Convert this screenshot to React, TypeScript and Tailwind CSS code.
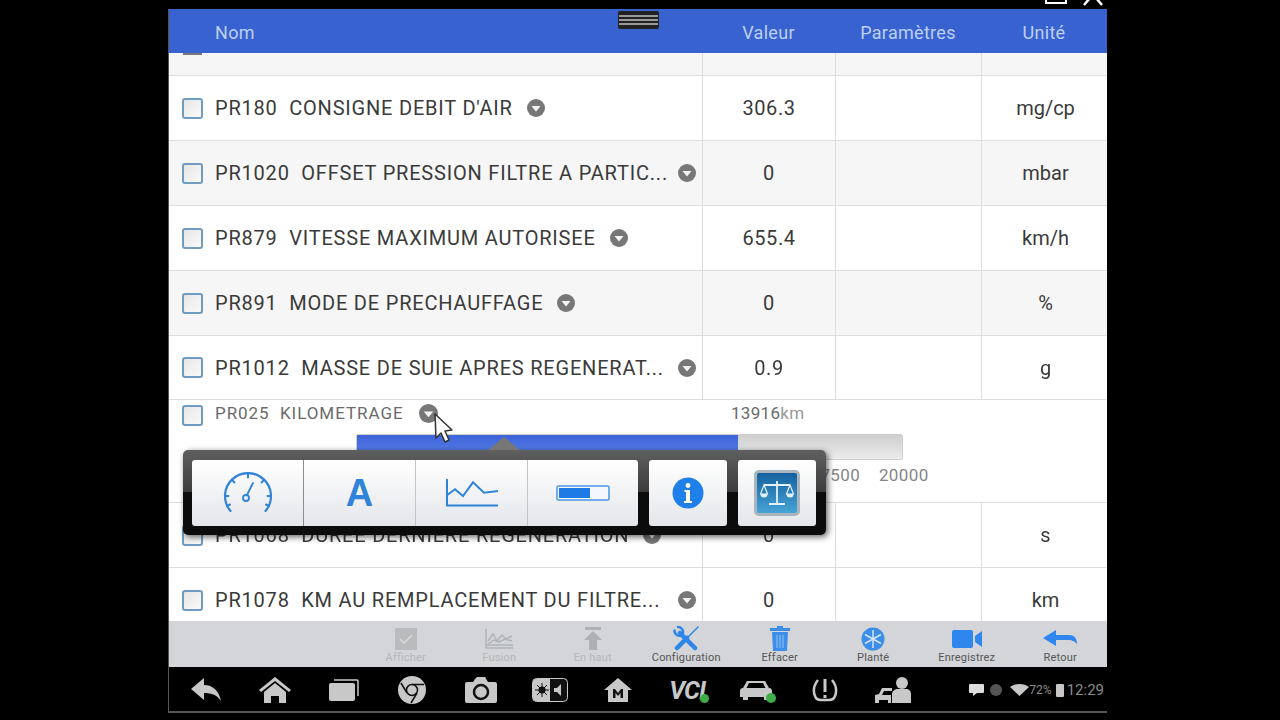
import type { ReactNode } from 'react';

interface RowProps {
  name: string;
  value: string;
  unit: string;
  gray?: boolean;
  height?: string;
}

const rows: RowProps[] = [
  { name: "PR180  CONSIGNE DEBIT D'AIR", value: '306.3', unit: 'mg/cp' },
  { name: 'PR1020  OFFSET PRESSION FILTRE A PARTIC...', value: '0', unit: 'mbar', gray: true },
  { name: 'PR879  VITESSE MAXIMUM AUTORISEE', value: '655.4', unit: 'km/h' },
  { name: 'PR891  MODE DE PRECHAUFFAGE', value: '0', unit: '%', gray: true },
  { name: 'PR1012  MASSE DE SUIE APRES REGENERAT...', value: '0.9', unit: 'g', height: 'h-[64px]' },
];

function Checkbox() {
  return (
    <span className="block h-[21px] w-[21px] shrink-0 rounded-[3px] border-2 border-[#6f9cc0] bg-gradient-to-br from-[#e6e6e6] to-[#fafafa]" />
  );
}

function DownDot({ size = 18 }: { size?: number }) {
  return (
    <svg width={size} height={size} viewBox="0 0 18 18" className="shrink-0">
      <circle cx="9" cy="9" r="9" fill="#777" />
      <path d="M4.5 7h9L9 12.5z" fill="#f4f4f4" />
    </svg>
  );
}

function Row({ name, value, unit, gray, height = 'h-[65px]' }: RowProps) {
  // les noms tronqués ont tous la flèche au même endroit
  const cut = name.endsWith('...');
  return (
    <div className={`flex ${height} shrink-0 border-b border-[#dedede] text-[20px] text-[#3a3a3a] ${gray ? 'bg-[#f6f6f6]' : 'bg-white'}`}>
      <div className="flex w-[533px] items-center pl-[13px]">
        <Checkbox />
        <span className={`ml-[12px] whitespace-pre tracking-[0.8px] ${cut ? 'w-[449px]' : ''}`}>{name}</span>
        <span className="ml-[14px]"><DownDot /></span>
      </div>
      <div className="flex w-[133px] items-center justify-center border-l border-[#dedede] tracking-[0.6px]">{value}</div>
      <div className="w-[146px] border-l border-[#dedede]" />
      <div className="flex w-[126px] items-center justify-center border-l border-[#dedede] pl-[2px]">{unit}</div>
    </div>
  );
}

function GaugeIcon() {
  return (
    <svg width="50" height="42" viewBox="0 0 50 42" fill="none" stroke="#2f83d8" strokeWidth="2.2" strokeLinecap="round">
      <path d="M7.5 39A23 23 0 1 1 42.5 39" />
      <path d="M25 2v3.5M9 8l2.5 2.5M41 8l-2.5 2.5M2 24h3.5M48 24h-3.5M4 34l3-1.5M46 34l-3-1.5" strokeWidth="2" />
      <circle cx="23" cy="26" r="3" strokeWidth="1.8" />
      <path d="M24 23l6-12" strokeWidth="1.8" />
    </svg>
  );
}

function GraphIcon() {
  return (
    <svg width="54" height="30" viewBox="0 0 54 30" fill="none" stroke="#2f83d8" strokeWidth="2">
      <path d="M2 1v26.5h51" />
      <path d="M2.3 17L10 11.3 18 18 28 4.3 39 14.7 53 13" />
    </svg>
  );
}

function BarIcon() {
  return (
    <svg width="54" height="16" viewBox="0 0 54 16">
      <rect x="1" y="1" width="52" height="14" rx="1.5" fill="#f4f8fd" stroke="#4b94e6" strokeWidth="1.5" />
      <rect x="3" y="3" width="31" height="10" fill="#1e7be6" />
    </svg>
  );
}

function InfoIcon() {
  return (
    <svg width="32" height="32" viewBox="0 0 32 32">
      <circle cx="16" cy="16" r="15.5" fill="#1f80ea" />
      <circle cx="16" cy="8.5" r="2.4" fill="#fff" />
      <path d="M12.5 13h5.5v11h2v2h-8v-2h2v-9h-1.5z" fill="#fff" />
    </svg>
  );
}

function ScaleIcon() {
  return (
    <span className="flex h-[46px] w-[46px] items-center justify-center rounded-[5px] border-[3px] border-[#a9b4bd] bg-gradient-to-b from-[#14619f] to-[#47a4d6]">
      <svg width="34" height="30" viewBox="0 0 34 30" fill="none" stroke="#e4f1f9" strokeWidth="1.8">
        <path d="M17 3v22M9 26h16M4 7h26" />
        <path d="M4 7L0.5 16h7zM30 7l-3.5 9h7z" strokeWidth="1.2" />
        <path d="M0.5 16a3.5 3.5 0 0 0 7 0zM26.5 16a3.5 3.5 0 0 0 7 0z" fill="#e4f1f9" stroke="none" />
      </svg>
    </span>
  );
}

function Popover() {
  const cell = 'flex h-full items-center justify-center bg-gradient-to-b from-white to-[#e4e6ea]';
  return (
    <div className="absolute left-[14px] top-[441px] h-[85px] w-[643px] rounded-[5px] bg-gradient-to-b from-[#5f5f5f] via-[#3c3c3c] via-50% to-[#0c0c0c] to-50% px-[9px] pt-[10px] shadow-[2px_2px_6px_rgba(0,0,0,0.6)]">
      <div className="absolute left-[305px] top-[-13px] h-0 w-0 border-x-[16px] border-b-[13px] border-x-transparent border-b-[#777]" />
      <div className="flex h-[66px] items-stretch">
        <div className="flex w-[446px] overflow-hidden rounded-[3px]">
          <div className={`${cell} w-[111px]`}><GaugeIcon /></div>
          <div className={`${cell} w-[112px] border-l border-[#8c8c8c]`}>
            <span className="font-['Liberation_Sans',sans-serif] text-[38px] font-bold text-[#2f83d8]">A</span>
          </div>
          <div className={`${cell} w-[112px] border-l border-[#c4c4c4]`}><GraphIcon /></div>
          <div className={`${cell} w-[111px] border-l border-[#c4c4c4]`}><BarIcon /></div>
        </div>
        <div className={`${cell} ml-[11px] w-[78px] rounded-[3px]`}><InfoIcon /></div>
        <div className={`${cell} ml-[11px] w-[78px] rounded-[3px]`}><ScaleIcon /></div>
      </div>
    </div>
  );
}

function ExpandedRow() {
  return (
    <div className="relative h-[103px] shrink-0 border-b border-[#dedede] bg-white text-[#6a6a6a]">
      <div className="flex h-[28px] items-center pl-[13px] pt-[3px] text-[17px]">
        <Checkbox />
        <span className="ml-[12px] w-[192px] whitespace-pre pb-[4px] tracking-[0.95px]">{'PR025  KILOMETRAGE'}</span>
        <span className="ml-[12px] pb-[4px]"><DownDot size={19} /></span>
        <span className="ml-[293px] pb-[4px] tracking-[0.3px]">13916<span className="text-[#999]">km</span></span>
      </div>
      <div className="ml-[187px] mt-[6px] flex h-[26px] w-[547px] rounded-[2px] border border-[#cfcfcf] bg-gradient-to-b from-[#cfcfcf] to-[#ececec]">
        <div className="h-full w-[381px] bg-gradient-to-b from-[#3f63d8] to-[#5c86ee]" />
      </div>
      <div className="ml-[153px] mt-[3px] grid w-[616px] grid-cols-9 text-center text-[17px] tracking-[0.4px] text-[#858585]">
        <span className="col-start-8">17500</span>
        <span>20000</span>
      </div>
    </div>
  );
}

function ToolButton({ icon, label, dim }: { icon: ReactNode; label: string; dim?: boolean }) {
  return (
    <div className="flex w-[93.5px] flex-col items-center pt-[5px]">
      <span className="flex h-[25px] items-center">{icon}</span>
      <span className={`text-[11px] leading-[14px] tracking-[0.2px] ${dim ? 'text-[#b5b5b5]' : 'text-[#555]'}`}>{label}</span>
    </div>
  );
}

function NavIcon({ children }: { children: ReactNode }) {
  return <span className="flex w-[68.7px] justify-center">{children}</span>;
}

export default function App() {
  return (
    <div className="relative h-[720px] w-[1280px] overflow-hidden bg-black font-['Roboto',sans-serif]">
      <div className="flex h-[9px] justify-end pr-[175px]">
        <span className="h-[4px] w-[22px] border-x-2 border-b-2 border-white" />
        <svg width="24" height="6" viewBox="0 0 24 6" className="ml-[14px]" stroke="#fff" strokeWidth="2.5"><path d="M3 5l6-7M21 5l-6-7" /></svg>
      </div>
      <div className="relative ml-[169px] flex h-[704px] w-[938px] flex-col overflow-hidden bg-white shadow-[-1px_0_0_#555] blur-[0.5px]">
        <div className="flex h-[44px] shrink-0 items-center bg-[#3862d0] pt-[2px] text-[18px] tracking-[0.3px] text-[#bcd0f6]">
          <span className="w-[533px] pl-[46px]">Nom</span>
          <span className="w-[133px] text-center">Valeur</span>
          <span className="w-[146px] text-center">Paramètres</span>
          <span className="w-[126px] text-center">Unité</span>
        </div>
        <div className="flex h-[23px] shrink-0 border-b border-[#dedede] bg-[#f6f6f6]">
          <div className="w-[533px] pl-[14px]"><span className="block h-[2px] w-[19px] bg-[#777]" /></div>
          <div className="w-[133px] border-l border-[#dedede]" />
          <div className="w-[146px] border-l border-[#dedede]" />
          <div className="w-[126px] border-l border-[#dedede]" />
        </div>
        {rows.map((r) => <Row key={r.name} {...r} />)}
        <ExpandedRow />
        <Row name="PR1068  DUREE DERNIERE REGENERATION" value="0" unit="s" />
        <div className="h-[53px] shrink-0 overflow-hidden">
          <Row name="PR1078  KM AU REMPLACEMENT DU FILTRE..." value="0" unit="km" />
        </div>

        <div className="flex h-[46px] shrink-0 justify-end bg-[#d3d5d9]">
          <ToolButton dim label="Afficher" icon={
            <svg width="22" height="22" viewBox="0 0 22 22"><rect width="22" height="22" fill="#b9bbbd" /><path d="M5 11l4 4 8-8" fill="none" stroke="#dcdcdc" strokeWidth="1.5" /></svg>
          } />
          <ToolButton dim label="Fusion" icon={
            <svg width="28" height="20" viewBox="0 0 28 20" fill="none" stroke="#b0b3b6" strokeWidth="1.5"><path d="M1 0v19h27M1 16h27" /><path d="M3 12l5-7 4 7 5-6 4 4 6-3M3 15l6-4 5 2 6-3 7 2" /></svg>
          } />
          <ToolButton dim label="En haut" icon={
            <svg width="22" height="24" viewBox="0 0 22 24" fill="#aeb0b2"><path d="M3 0h16v3H3zM11 4l9 9h-5v10H7V13H2z" /></svg>
          } />
          <ToolButton label="Configuration" icon={
            <svg width="26" height="25" viewBox="0 0 26 25" fill="none" stroke="#2e86e8" strokeLinecap="round">
              <path d="M7 7l15 15" strokeWidth="4.5" />
              <path d="M1.5 4.5a5 5 0 0 0 7.5 4.5M9 9a5 5 0 0 0-4-8" strokeWidth="2.5" />
              <path d="M25 1L15 11" strokeWidth="1.5" />
              <path d="M14 12L4 22" strokeWidth="4.5" />
            </svg>
          } />
          <ToolButton label="Effacer" icon={
            <svg width="22" height="25" viewBox="0 0 22 25" fill="#3d8ee8"><path d="M8 0h6v2h7v3H1V2h7zM3 6h16l-1 19H4z" /><path d="M8 9v13M11 9v13M14 9v13" stroke="#9cc4ef" /></svg>
          } />
          <ToolButton label="Planté" icon={
            <svg width="24" height="24" viewBox="0 0 24 24"><circle cx="12" cy="12" r="11.5" fill="#3d8ee8" /><path d="M12 3v18M4 7.5l16 9M20 7.5l-16 9" stroke="#d3e4f7" strokeWidth="1.5" /></svg>
          } />
          <ToolButton label="Enregistrez" icon={
            <svg width="30" height="18" viewBox="0 0 30 18" fill="#2e86ee"><rect width="21" height="18" rx="2" /><path d="M23 6l7-5v16l-7-5z" /></svg>
          } />
          <ToolButton label="Retour" icon={
            <svg width="34" height="18" viewBox="0 0 34 18" fill="#2e86ee"><path d="M0 8L13 0v5h13c5 0 8 3 8 9-3-3-5-4-8-4H13v6z" /></svg>
          } />
        </div>

        <div className="flex h-[44px] shrink-0 items-center bg-black pl-[3px] pt-[2px]">
          <NavIcon><svg width="30" height="24" viewBox="0 0 30 24" fill="#c8c8c8"><path d="M0 11L13 0v7c9 0 15 6 17 16-4-6-9-8-17-8v7z" /></svg></NavIcon>
          <NavIcon><svg width="32" height="26" viewBox="0 0 32 26" fill="#c8c8c8"><path d="M16 0L32 13l-2 2L16 4 2 15l-2-2z" /><path d="M5 15L16 6l11 9v11h-7v-7h-8v7H5z" /></svg></NavIcon>
          <NavIcon><svg width="30" height="22" viewBox="0 0 30 22" fill="#c8c8c8"><rect y="4" width="26" height="18" rx="2" /><path d="M5 1h23a1 1 0 0 1 1 1v15" fill="none" stroke="#c8c8c8" strokeWidth="1.5" /></svg></NavIcon>
          <NavIcon><svg width="28" height="28" viewBox="0 0 28 28"><circle cx="14" cy="14" r="14" fill="#c8c8c8" /><circle cx="14" cy="14" r="5.5" fill="none" stroke="#111" strokeWidth="1.5" /><path d="M14 8.5h12M9 17L3 7M19 17l-6 10" stroke="#111" strokeWidth="1.5" /></svg></NavIcon>
          <NavIcon><svg width="32" height="26" viewBox="0 0 32 26"><path d="M2 5h6l2-3 2-2h8l3 5h7a2 2 0 0 1 2 2v17a2 2 0 0 1-2 2H2a2 2 0 0 1-2-2V7a2 2 0 0 1 2-2z" fill="#c8c8c8" /><circle cx="16" cy="15" r="7" fill="#c8c8c8" stroke="#111" strokeWidth="2.5" /></svg></NavIcon>
          <NavIcon><svg width="36" height="24" viewBox="0 0 36 24"><rect x="0.5" y="0.5" width="35" height="23" rx="4" fill="#111" stroke="#c8c8c8" /><path d="M1 4a3 3 0 0 1 3-3h14v22H4a3 3 0 0 1-3-3z" fill="#c8c8c8" /><circle cx="10" cy="12" r="3.5" fill="#111" /><path d="M10 5v14M3 12h14M5 7l10 10M15 7L5 17" stroke="#111" /><path d="M22 10h3l4-4v12l-4-4h-3z" fill="#c8c8c8" /></svg></NavIcon>
          <NavIcon><svg width="28" height="24" viewBox="0 0 28 24" fill="#c8c8c8"><path d="M14 0L28 12h-4v12H4V12H0z" /><path d="M9 20v-9h2l3 4 3-4h2v9h-2.5v-5L14 18l-2.5-3v5z" fill="#111" /></svg></NavIcon>
          <NavIcon>
            <span className="relative text-[25px] font-bold italic leading-none tracking-[-1px] text-[#c8c8c8]">
              VCI
              <span className="absolute bottom-[0px] right-[-4px] h-[9px] w-[9px] rounded-full bg-[#3fae49]" />
            </span>
          </NavIcon>
          <NavIcon>
            <span className="relative">
              <svg width="32" height="22" viewBox="0 0 32 22" fill="#c8c8c8"><path d="M7 2h18l4 7c2 0 3 1 3 3v6h-3v3h-5v-3H8v3H3v-3H0v-6c0-2 1-3 3-3zM9 4L6.5 9h19L23 4z" fillRule="evenodd" /></svg>
              <span className="absolute bottom-[-2px] right-[-4px] h-[10px] w-[10px] rounded-full bg-[#3fae49]" />
            </span>
          </NavIcon>
          <NavIcon><svg width="26" height="26" viewBox="0 0 26 26" fill="none" stroke="#c8c8c8" strokeWidth="2.5"><path d="M6 3C2 8 1 14 3 19c1 3 3 4 6 4h8c3 0 5-1 6-4 2-5 1-11-3-16" /><path d="M13 2v13M13 18v3" strokeWidth="3" /></svg></NavIcon>
          <NavIcon><svg width="36" height="26" viewBox="0 0 36 26" fill="#c8c8c8"><circle cx="27" cy="6" r="6" /><path d="M17 26V17c0-3 3-5 6-5h8c3 0 5 2 5 5v9z" /><path d="M0 26v-8l4-1 3-6h10v3H9l-2 4h9v8h-3v-3H4v3z" /></svg></NavIcon>
          <div className="ml-auto flex items-center pr-[3px] text-[#8c8c8c]">
            <svg width="15" height="12" viewBox="0 0 15 12" fill="#ddd"><path d="M1 0h13a1 1 0 0 1 1 1v7a1 1 0 0 1-1 1H8l-4 3V9H1a1 1 0 0 1-1-1V1a1 1 0 0 1 1-1z" /></svg>
            <span className="ml-[6px] h-[12px] w-[12px] rounded-full bg-[#555]" />
            <svg width="19" height="12" viewBox="0 0 19 12" fill="#c8c8c8" className="ml-[8px]"><path d="M0 3c5-4 14-4 19 0l-9.5 9z" /></svg>
            <span className="text-[12px]">72%</span>
            <span className="ml-[4px] h-[13px] w-[8px] rounded-[1px] bg-[#c8c8c8]" />
            <span className="ml-[3px] text-[15px]">12:29</span>
          </div>
        </div>
        <div className="h-[2px] shrink-0 bg-[#555]" />

        <Popover />
        <div className="absolute left-[449px] top-[2px] flex h-[18px] w-[41px] flex-col justify-center gap-[2px] rounded-[2px] bg-[#222] px-[1px]">
          <span className="h-[2px] bg-[#999]" />
          <span className="h-[2px] bg-[#999]" />
          <span className="h-[2px] bg-[#999]" />
        </div>
        <svg width="20" height="30" viewBox="0 0 20 30" className="absolute left-[265px] top-[404px]">
          <path d="M1 1L2 25 7 20 11 29 15 27 11 18 18 17z" fill="#fff" stroke="#333" strokeWidth="1.5" strokeLinejoin="round" />
        </svg>
      </div>
    </div>
  );
}
